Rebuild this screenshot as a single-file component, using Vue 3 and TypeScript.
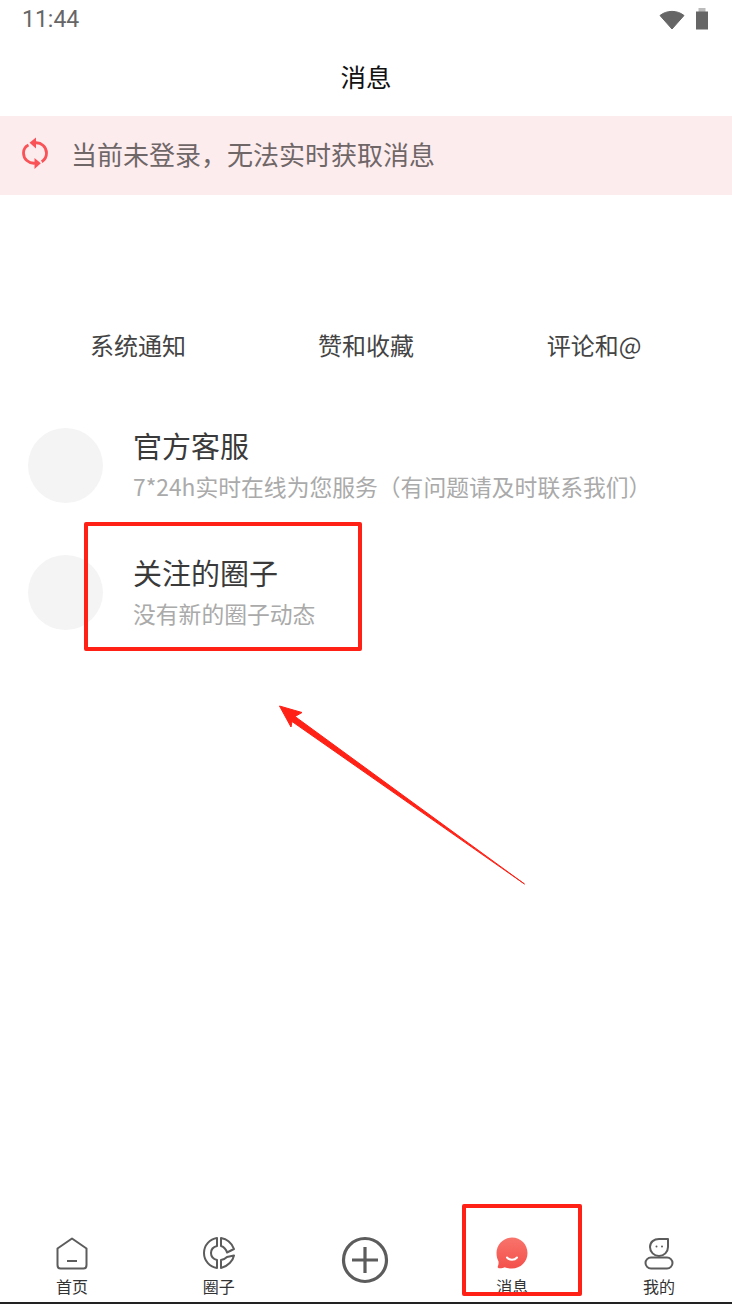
<script setup lang="ts">
const tabs: string[] = ['系统通知', '赞和收藏', '评论和@']
const rows = [
  { title: '官方客服', sub: '7*24h实时在线为您服务\uFF08有问题请及时联系我们\uFF09' },
  { title: '关注的圈子', sub: '没有新的圈子动态' },
]
</script>

<template>
  <div class="page">
    <header class="status">
      <span class="time">11:44</span>
      <div class="status-icons">
        <svg width="26" height="21" viewBox="0 0 26 21"><path d="M1 6.500C7.500 1 18.500 1 25 6.500L13 20Z" fill="#666" stroke="#666" stroke-linejoin="round" /></svg>
        <svg width="12" height="22" viewBox="0 0 12 22"><rect x="2.500" y="0" width="7" height="4" fill="#bbb" /><rect x="0" y="3.500" width="12" height="18" fill="#666" /></svg>
      </div>
    </header>
    <div class="title">消息</div>
    <div class="banner">
      <svg class="sync" width="26" height="34" viewBox="0 0 26 34" fill="none" stroke="#f95257" stroke-width="2.800">
        <path d="M13 5.800C19.500 5.200 24.500 10 24.500 16C24.500 19.500 22.800 22.800 19.700 24.700" />
        <path d="M13 26.200C6.500 26.800 1.500 22 1.500 16C1.500 12.500 3.200 9.500 6.500 8" />
        <path d="M14 0.500V11.500L7.500 5.800Z" fill="#f95257" stroke="none" />
        <path d="M12.500 21V32L18.800 26.300Z" fill="#f95257" stroke="none" />
      </svg>
      <span>当前未登录&#xFF0C;无法实时获取消息</span>
    </div>
    <nav class="tabs">
      <span v-for="t in tabs" :key="t" class="tab">{{ t }}</span>
    </nav>
    <section class="list">
      <div v-for="r in rows" :key="r.title" class="row">
        <div class="avatar"></div>
        <div class="texts">
          <div class="row-title">{{ r.title }}</div>
          <div class="row-sub">{{ r.sub }}</div>
        </div>
      </div>
    </section>
    <footer class="nav">
      <div class="nav-item">
        <svg class="ico" width="34" height="34" viewBox="0 0 34 34" fill="none" stroke="#5c5c5c" stroke-width="2">
          <path d="M17 2.500L31.500 12.500V29C31.500 31.500 30.500 32.500 28.500 32.500H5.500C3.500 32.500 2.500 31.500 2.500 29V12.500Z" stroke-linejoin="round" />
          <path d="M12 25H22" />
        </svg>
        <span class="label">首页</span>
      </div>
      <div class="nav-item">
        <svg class="ico" width="34" height="34" viewBox="0 0 34 34" fill="none" stroke="#5c5c5c" stroke-width="2" stroke-linejoin="round">
          <path d="M15 2V10C11 11 9 14 9 17C9 20 11 23 15 24V32C8 31 2 25 2 17C2 9 8 3 15 2Z" />
          <path d="M19 2C24.500 3 30 7 32 13L25 16.500C24 13 22 11 19 10Z" />
          <path d="M32 19.500C31 24.500 26 30.500 19 32V24C21.500 23.500 23.500 22.500 25 21Z" />
        </svg>
        <span class="label">圈子</span>
      </div>
      <div class="nav-item">
        <svg class="plus" width="48" height="48" viewBox="0 0 48 48" fill="none" stroke="#5c5c5c" stroke-width="3.200">
          <circle cx="24" cy="24" r="21.500" />
          <path d="M24 11V37M11 24H37" />
        </svg>
      </div>
      <div class="nav-item">
        <svg class="ico" width="34" height="34" viewBox="0 0 34 34">
          <defs>
            <linearGradient id="msg" x1="0" y1="0" x2="0" y2="1">
              <stop offset="0" stop-color="#f8746c" />
              <stop offset="1" stop-color="#f4504a" />
            </linearGradient>
          </defs>
          <path d="M17 1.500C25.800 1.500 32.500 8.500 32.500 17C32.500 25.800 25.500 32.500 17 32.500C14 32.500 11.500 32 9.500 31.200C7.500 32.500 3.500 32.800 2.800 31.500C2.300 30.500 4 29 3.500 25.500C2.300 23 1.500 20.500 1.500 17C1.500 8.500 8.500 1.500 17 1.500Z" fill="url(#msg)" />
          <path d="M12 21.500C14.500 24.500 19.500 24.500 22 21.500" fill="none" stroke="#fff" stroke-width="2" stroke-linecap="round" />
        </svg>
        <span class="label">消息</span>
      </div>
      <div class="nav-item">
        <svg class="ico" width="34" height="34" viewBox="0 0 34 34" fill="none" stroke="#5c5c5c" stroke-width="2">
          <path d="M26 3V11C26 16 22 20 17 20C12 20 8 16 8 11C8 6 12 3 17 3Z" stroke-linejoin="round" />
          <circle cx="14.500" cy="10.500" r="1" fill="#5c5c5c" stroke="none" />
          <circle cx="20" cy="10.500" r="1" fill="#5c5c5c" stroke="none" />
          <rect x="3.500" y="21.500" width="27" height="11" rx="5.500" />
        </svg>
        <span class="label">我的</span>
      </div>
    </footer>
    <div class="end-line"></div>

    <div class="mark mark-row"></div>
    <div class="mark mark-nav"></div>
    <svg class="arrow" width="732" height="1304" viewBox="0 0 732 1304">
      <path d="M279.500 706L302 712.500L295 716.500L524.500 884L292 721.500L291 727Z" fill="#ff2116" stroke="#ff2116" stroke-width="1" stroke-linejoin="round" />
    </svg>
  </div>
</template>

<style>
html, body { margin: 0; background: #fff; }
</style>

<style scoped>
.page {
  position: relative;
  width: 732px;
  height: 1304px;
  overflow: hidden;
  display: flex;
  flex-direction: column;
  background: #fff;
  font-family: "Noto Sans CJK SC", "Noto Sans", sans-serif;
}
.status {
  height: 38px;
  flex: none;
  display: flex;
  align-items: center;
  justify-content: space-between;
  padding: 0 24px 0 22px;
}
.time {
  font-family: Roboto, sans-serif;
  font-size: 23px;
  color: #666;
}
.status-icons {
  display: flex;
  align-items: center;
  gap: 11px;
}
.title {
  height: 78px;
  flex: none;
  box-sizing: border-box;
  padding-bottom: 4px;
  display: flex;
  align-items: center;
  justify-content: center;
  font-size: 25.500px;
  color: #111;
}
.banner {
  height: 79px;
  flex: none;
  box-sizing: border-box;
  padding: 0 0 4px 22px;
  display: flex;
  align-items: center;
  gap: 23px;
  background: #fdecee;
  font-size: 26px;
  color: #6f6667;
}
.sync { flex: none; }
.tabs {
  height: 62px;
  margin-top: 119px;
  padding: 0 24px;
  flex: none;
  display: flex;
}
.tab {
  flex: 1;
  text-align: center;
  font-size: 24px;
  line-height: 62px;
  color: #444;
}
.list {
  margin-top: 26px;
  flex: 1;
}
.row {
  height: 127px;
  display: flex;
  align-items: center;
  gap: 31px;
  padding-left: 28px;
}
.avatar {
  width: 75px;
  height: 75px;
  flex: none;
  border-radius: 50%;
  background: #f4f4f4;
}
.texts { padding-bottom: 2px; }
.row-title {
  font-size: 29px;
  line-height: 44px;
  margin-left: -1px;
  color: #3a3a3a;
}
.row-sub {
  font-size: 22.800px;
  line-height: 40px;
  margin-left: -1px;
  color: #aaa;
  white-space: nowrap;
}
.nav {
  flex: none;
  height: 66px;
  margin: 0 -0.500px 0 -1.500px;
  display: flex;
}
.nav-item {
  flex: 1;
  display: flex;
  flex-direction: column;
  align-items: center;
  font-size: 16px;
  line-height: 20px;
  color: #333;
}
.label { margin-top: 6px; }
.ico { flex: none; }
.plus { flex: none; }
.end-line {
  height: 2px;
  flex: none;
  background: #222;
}
.mark {
  position: absolute;
  box-sizing: border-box;
  border: 4px solid #ff2116;
  border-radius: 2px;
}
.mark-row { left: 84px; top: 522px; width: 278px; height: 129px; }
.mark-nav { left: 462px; top: 1204px; width: 120px; height: 92px; }
.arrow { position: absolute; left: 0; top: 0; pointer-events: none; }
</style>
